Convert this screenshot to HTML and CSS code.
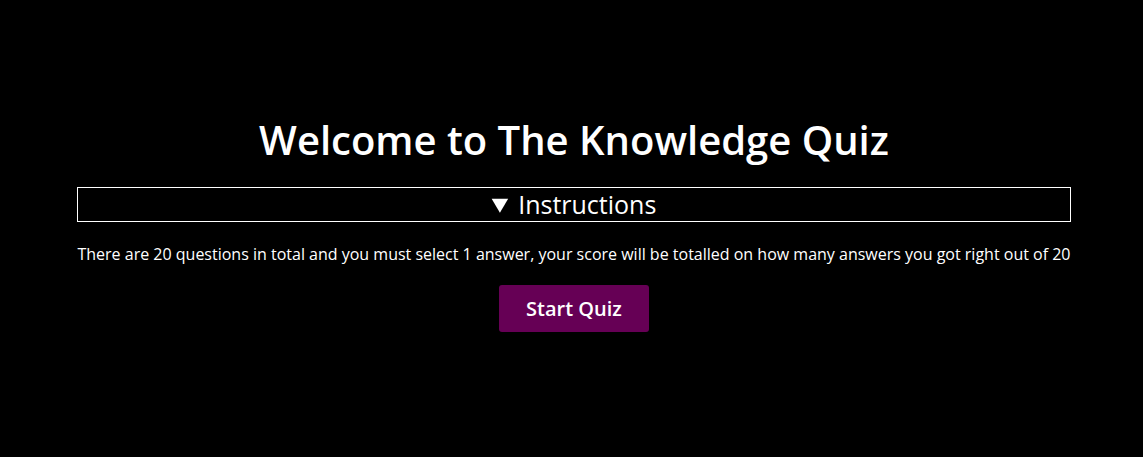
FILE: index.html
```html
<!DOCTYPE html>
<html>
<head>
<meta charset="utf-8">
<link rel="stylesheet" href="styles.css">
</head>
<body>
<main class="page">
  <div class="quiz">
    <h1 class="title">Welcome to The Knowledge Quiz</h1>
    <details class="instructions" open>
      <summary class="summary">Instructions</summary>
      <p class="text">There are 20 questions in total and you must select 1 answer, your score will be totalled on how many answers you got right out of 20</p>
    </details>
    <button class="start">Start Quiz</button>
  </div>
</main>
</body>
</html>
```

FILE: styles.css
```css
html, body {
  margin: 0;
  padding: 0;
  background: #000;
  color: #fff;
  font-family: "Open Sans", "Liberation Sans", sans-serif;
}
.page {
  display: flex;
  justify-content: center;
  padding: 113px 0 0 5px;
}
.quiz {
  display: flex;
  flex-direction: column;
  align-items: center;
}
.title {
  margin: 0 0 20px;
  font-size: 40px;
  font-weight: 600;
  line-height: 54px;
}
.instructions {
  width: 100%;
}
.summary {
  border: 1px solid #fff;
  text-align: center;
  font-size: 25px;
  line-height: 33px;
  cursor: pointer;
}
.text {
  margin: 21px 0 0;
  font-size: 16px;
  line-height: 22px;
}
.start {
  margin-top: 20px;
  width: 150px;
  height: 47px;
  border: none;
  border-radius: 3px;
  background: #660055;
  color: #fff;
  font-family: inherit;
  font-size: 20px;
  font-weight: 600;
}
```
